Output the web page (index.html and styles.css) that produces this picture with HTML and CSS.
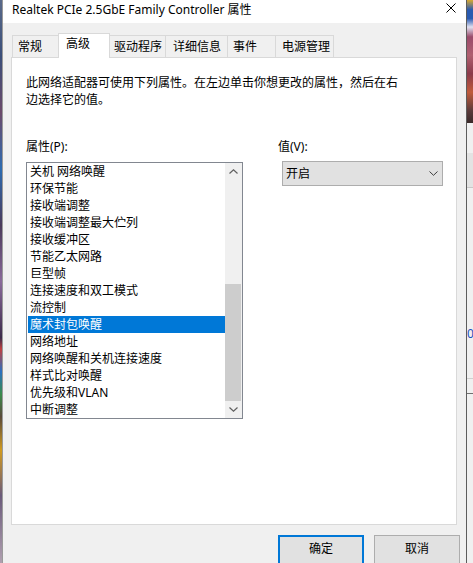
FILE: index.html
```html
<!DOCTYPE html>
<html lang="zh-CN">
<head>
<meta charset="utf-8">
<title>Realtek PCIe 2.5GbE Family Controller 属性</title>
<link rel="stylesheet" href="styles.css">
</head>
<body>
<div class="desk">
  <div class="strip-left"></div>
  <div class="window">
    <div class="titlebar">
      <span class="title">Realtek PCIe 2.5GbE Family Controller 属性</span>
      <svg class="close" width="10" height="10" viewBox="0 0 10 10"><path d="M0.5 0.5 L9.5 9.5 M9.5 0.5 L0.5 9.5" stroke="#000" stroke-width="1" fill="none"/></svg>
    </div>
    <div class="dialog">
      <div class="tabs">
        <div class="tab t49">常规</div>
        <div class="tab active">高级</div>
        <div class="tab t58">驱动程序</div>
        <div class="tab t63">详细信息</div>
        <div class="tab t49">事件</div>
        <div class="tab t59">电源管理</div>
      </div>
      <div class="panel">
        <p class="desc">此网络适配器可使用下列属性。在左边单击你想更改的属性，然后在右<br>边选择它的值。</p>
        <div class="fields">
          <div class="col-prop">
            <div class="label">属性(P):</div>
            <div class="listbox">
              <ul class="items">
                <li>关机 网络唤醒</li>
                <li>环保节能</li>
                <li>接收端调整</li>
                <li>接收端调整最大伫列</li>
                <li>接收缓冲区</li>
                <li>节能乙太网路</li>
                <li>巨型帧</li>
                <li>连接速度和双工模式</li>
                <li>流控制</li>
                <li class="selected">魔术封包唤醒</li>
                <li>网络地址</li>
                <li>网络唤醒和关机连接速度</li>
                <li>样式比对唤醒</li>
                <li>优先级和VLAN</li>
                <li>中断调整</li>
              </ul>
              <div class="scrollbar">
                <div class="sb-btn"><svg width="9" height="5" viewBox="0 0 9 5"><path d="M0.5 4.5 L4.5 0.8 L8.5 4.5" stroke="#606060" stroke-width="1.2" fill="none"/></svg></div>
                <div class="sb-track"><div class="sb-thumb"></div></div>
                <div class="sb-btn"><svg width="9" height="5" viewBox="0 0 9 5"><path d="M0.5 0.5 L4.5 4.2 L8.5 0.5" stroke="#606060" stroke-width="1.2" fill="none"/></svg></div>
              </div>
            </div>
          </div>
          <div class="col-val">
            <div class="label">值(V):</div>
            <div class="combo">
              <span>开启</span>
              <svg class="combo-arrow" width="9" height="5" viewBox="0 0 9 5"><path d="M0.5 0.5 L4.5 4.3 L8.5 0.5" stroke="#3c3c3c" stroke-width="1" fill="none"/></svg>
            </div>
          </div>
        </div>
      </div>
      <div class="buttons">
        <button class="btn default">确定</button>
        <button class="btn">取消</button>
      </div>
    </div>
  </div>
  <div class="strip-right">
    <div class="sr-desk"></div>
    <div class="sr-a"></div>
    <div class="sr-b"></div>
    <div class="sr-c"><span class="sr-digit">0</span></div>
    <div class="sr-d"></div>
    <div class="sr-e"></div>
  </div>
</div>
</body>
</html>
```
FILE: styles.css
```css
html, body {
  margin: 0;
  padding: 0;
  width: 473px;
  height: 563px;
  overflow: hidden;
  background: #f0f0f0;
}
body {
  font-family: "Noto Sans", "Noto Sans CJK SC", sans-serif;
  font-size: 12px;
  line-height: 17px;
  color: #000;
}
.desk {
  display: flex;
  height: 563px;
  overflow: hidden;
}
.strip-left {
  width: 2px;
  flex: none;
  background: linear-gradient(180deg, #5a6a8a 0%, #3b4f7a 10%, #6b4a6a 20%, #2d6bb0 30%, #4a3a5a 40%, #8a6a9a 50%, #3b2a4a 60%, #c04040 62%, #2a70c0 66%, #3a8a4a 70%, #5a4a3a 74%, #d09a20 80%, #6a5a7a 88%, #b0a0b0 100%);
}
.window {
  width: 465px;
  flex: none;
  box-sizing: border-box;
  border-left: 1px solid #9a9a9a;
  border-right: 1px solid #5c5c5c;
  display: flex;
  flex-direction: column;
}
.titlebar {
  height: 23px;
  flex: none;
  background: #fff;
  display: flex;
  align-items: flex-start;
  padding-left: 9px;
}
.title {
  padding-top: 1px;
  white-space: nowrap;
}
.close {
  margin-left: auto;
  margin-right: 10px;
  margin-top: 3px;
  flex: none;
}
.dialog {
  flex: 1;
  background: #f0f0f0;
  padding: 10px 9px 0 8px;
}
.tabs {
  display: flex;
  align-items: flex-start;
  height: 24px;
  padding-left: 1px;
}
.tab {
  box-sizing: border-box;
  height: 22px;
  margin-top: 2px;
  margin-right: -1px;
  border: 1px solid #d9d9d9;
  border-bottom: 0;
  padding: 2px 0 0 5px;
  background: #f0f0f0;
  white-space: nowrap;
}
.t49 { width: 49px; }
.t58 { width: 58px; }
.t63 { width: 63px; padding-left: 7px; }
.t59 { width: 59px; padding-left: 6px; }
.tab.active {
  position: relative;
  z-index: 1;
  width: 52px;
  height: 25px;
  margin-top: 0;
  margin-left: -2px;
  margin-right: -2px;
  padding: 1px 0 0 7px;
  background: #fff;
}
.panel {
  box-sizing: border-box;
  width: 446px;
  height: 468px;
  background: #fff;
  border: 1px solid #d9d9d9;
  padding: 16px 14px 0 14px;
}
.desc {
  margin: 0;
  white-space: nowrap;
}
.fields {
  display: flex;
  margin-top: 30px;
}
.col-prop {
  width: 217px;
  flex: none;
}
.label {
  height: 17px;
}
.listbox {
  box-sizing: border-box;
  width: 217px;
  height: 257px;
  margin-top: 7px;
  border: 1px solid #828790;
  display: flex;
  background: #fff;
}
.items {
  flex: 1;
  margin: 0;
  padding: 0 0 0 1px;
  list-style: none;
  min-width: 0;
}
.items li {
  height: 17px;
  padding-left: 2px;
  white-space: nowrap;
}
.items li.selected {
  background: #0078d7;
  color: #fff;
}
.scrollbar {
  width: 17px;
  flex: none;
  background: #f0f0f0;
  display: flex;
  flex-direction: column;
}
.sb-btn {
  height: 17px;
  flex: none;
  display: flex;
  align-items: center;
  justify-content: center;
}
.sb-track {
  flex: 1;
  display: flex;
  flex-direction: column;
  justify-content: flex-end;
}
.sb-thumb {
  height: 117px;
  margin: 0 1px 0 0;
  background: #cdcdcd;
}
.col-val {
  margin-left: 35px;
  flex: none;
}
.combo {
  box-sizing: border-box;
  width: 161px;
  height: 25px;
  margin-top: 6px;
  margin-left: 4px;
  background: #e1e1e1;
  border: 1px solid #adadad;
  display: flex;
  align-items: center;
  padding-left: 3px;
}
.combo-arrow {
  margin-left: auto;
  margin-right: 4px;
}
.buttons {
  display: flex;
  justify-content: flex-end;
  gap: 10px;
  margin-top: 10px;
  margin-right: -3px;
}
.btn {
  box-sizing: border-box;
  width: 86px;
  height: 40px;
  padding: 0 0 13px 0;
  margin: 0;
  background: #e1e1e1;
  border: 1px solid #adadad;
  font-family: inherit;
  font-size: 12px;
  line-height: 17px;
  color: #000;
  text-align: center;
  display: block;
}
.btn.default {
  border-color: #0078d7;
  box-shadow: inset 0 0 0 1px #0078d7;
}
.strip-right {
  width: 6px;
  flex: none;
  display: flex;
  flex-direction: column;
}
.sr-desk {
  height: 123px;
  flex: none;
  background: linear-gradient(180deg, #d8a830 0%, #2a5ab0 8%, #2a5ab0 15%, #e0e0f0 22%, #9a4a6a 30%, #b06070 45%, #8a3a4a 60%, #c05a3a 75%, #5a3a3a 90%, #3a2a2a 100%);
}
.sr-a {
  height: 30px;
  flex: none;
  background: #f0f0f0;
}
.sr-b {
  height: 34px;
  flex: none;
  background: #e3e3e3;
  border-bottom: 1px solid #c8c8c8;
}
.sr-c {
  height: 190px;
  flex: none;
  background: #f0f0f0;
  position: relative;
  overflow: hidden;
}
.sr-digit {
  position: absolute;
  left: 0;
  top: 137px;
  color: #2050c0;
  font-size: 12px;
}
.sr-d {
  height: 14px;
  flex: none;
  background: #f0f0f0;
  border-top: 1px solid #d0d0d0;
  border-bottom: 1px solid #707070;
}
.sr-e {
  flex: 1;
  background: #f0f0f0;
}
```
